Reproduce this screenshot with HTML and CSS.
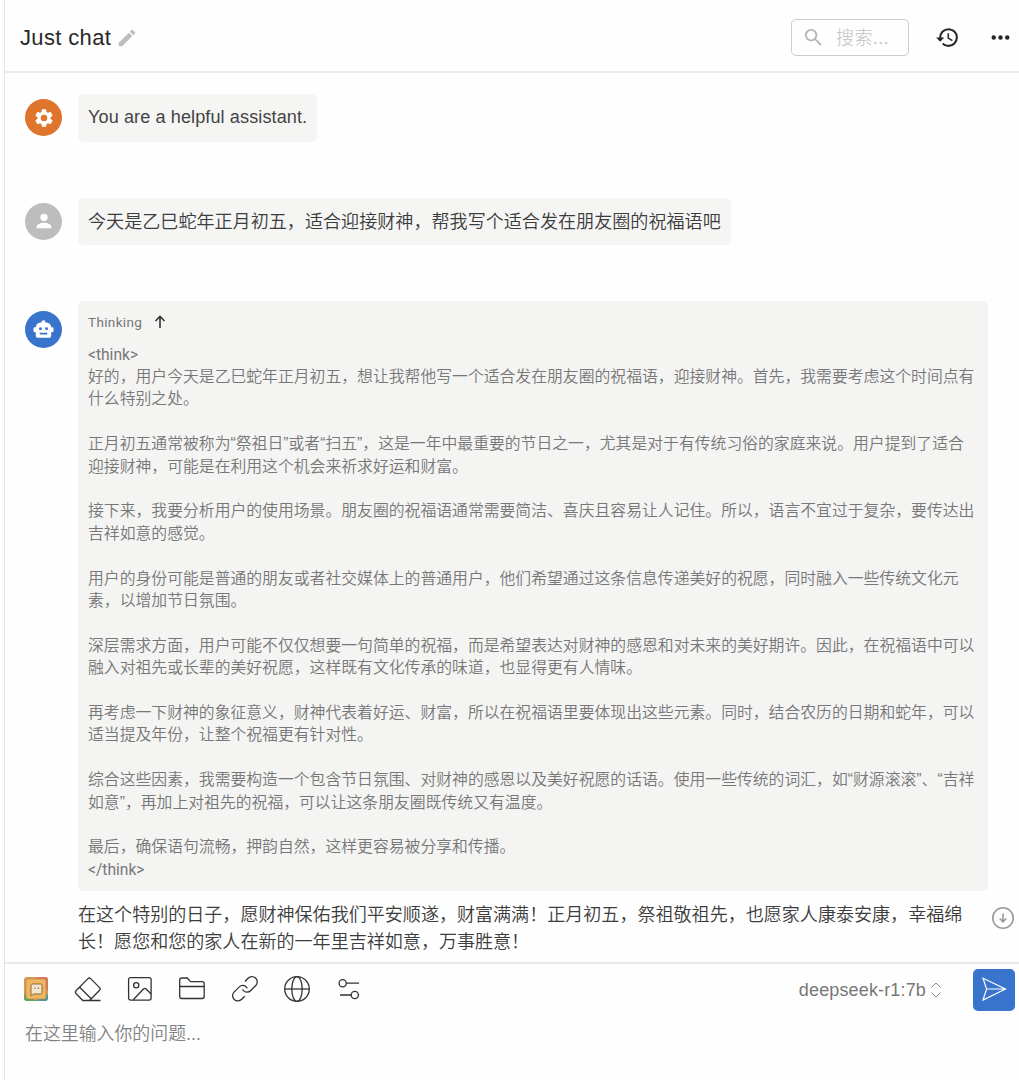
FILE: index.html
```html
<!DOCTYPE html>
<html lang="zh-CN">
<head>
  <meta charset="UTF-8">
  <meta name="viewport" content="width=device-width, initial-scale=1.0">
  <link rel="stylesheet" href="styles.css">
  <title>Just chat</title>
</head>
<body>
<div class="app">

  <header class="header">
    <h1>Just chat</h1>
    <svg class="edit" viewBox="0 0 24 24"><path d="M3 17.25V21h3.75L17.81 9.94l-3.75-3.75L3 17.25zM20.71 7.04a1 1 0 0 0 0-1.41l-2.34-2.34a1 1 0 0 0-1.41 0l-1.83 1.83 3.75 3.75 1.83-1.83z"/></svg>
    <div class="search">
      <svg viewBox="0 0 24 24"><path d="M15.5 14h-.79l-.28-.27A6.47 6.47 0 0 0 16 9.5 6.5 6.5 0 1 0 9.5 16c1.61 0 3.09-.59 4.23-1.57l.27.28v.79l5 4.99L20.49 19l-4.99-5zm-6 0a4.5 4.5 0 1 1 0-9 4.5 4.5 0 0 1 0 9z"/></svg>
      <span>搜索...</span>
    </div>
    <svg class="history" viewBox="0 0 24 24"><path d="M13.5 8H12v5l4.28 2.54.72-1.21-3.5-2.08V8M13 3a9 9 0 0 0-9 9H1l3.96 4.03L9 12H6a7 7 0 1 1 7 7c-1.93 0-3.68-.79-4.94-2.06l-1.42 1.42A8.9 8.9 0 0 0 13 21a9 9 0 0 0 0-18"/></svg>
    <svg class="more" viewBox="0 0 24 24"><path d="M6 10a2 2 0 1 0 0 4 2 2 0 0 0 0-4zm12 0a2 2 0 1 0 0 4 2 2 0 0 0 0-4zm-6 0a2 2 0 1 0 0 4 2 2 0 0 0 0-4z"/></svg>
  </header>

  <main class="messages">
    <div class="message">
      <div class="avatar system">
        <svg viewBox="0 0 24 24"><path d="M19.14 12.94c.04-.3.06-.61.06-.94 0-.32-.02-.64-.07-.94l2.03-1.58a.49.49 0 0 0 .12-.61l-1.92-3.32a.49.49 0 0 0-.59-.22l-2.39.96c-.5-.38-1.03-.7-1.62-.94l-.36-2.54a.48.48 0 0 0-.48-.41h-3.84c-.24 0-.43.17-.47.41l-.36 2.54c-.59.24-1.13.57-1.62.94l-2.39-.96a.48.48 0 0 0-.59.22L2.74 8.87c-.12.21-.08.47.12.61l2.03 1.58c-.05.3-.09.63-.09.94s.02.64.07.94l-2.03 1.58a.49.49 0 0 0-.12.61l1.92 3.32c.12.22.37.29.59.22l2.39-.96c.5.38 1.03.7 1.62.94l.36 2.54c.05.24.24.41.48.41h3.84c.24 0 .44-.17.47-.41l.36-2.54c.59-.24 1.13-.56 1.62-.94l2.39.96c.22.08.47 0 .59-.22l1.92-3.32a.48.48 0 0 0-.12-.61l-2.01-1.58zM12 15.6a3.6 3.6 0 1 1 0-7.2 3.6 3.6 0 0 1 0 7.2z"/></svg>
      </div>
      <div class="bubble latin">You are a helpful assistant.</div>
    </div>

    <div class="message">
      <div class="avatar user">
        <svg viewBox="0 0 24 24"><path d="M12 12a4 4 0 1 0 0-8 4 4 0 0 0 0 8zm0 2c-2.67 0-8 1.34-8 4v2h16v-2c0-2.66-5.33-4-8-4z"/></svg>
      </div>
      <div class="bubble">今天是乙巳蛇年正月初五，适合迎接财神，帮我写个适合发在朋友圈的祝福语吧</div>
    </div>

    <div class="message reply">
      <div class="avatar bot">
        <svg viewBox="0 0 24 24"><path fill-rule="evenodd" d="M12 1.500a2.200 2.200 0 0 1 2.200 2.500h1.300a5.500 5.500 0 0 1 5.300 5.500H22a1.500 1.500 0 0 1 1.500 1.500v2.500A1.500 1.500 0 0 1 22 15h-1.200v4a2.500 2.500 0 0 1-2.500 2.500H5.700A2.500 2.500 0 0 1 3.200 19v-4H2a1.500 1.500 0 0 1-1.500-1.500V11A1.500 1.500 0 0 1 2 9.500h1.200A5.500 5.500 0 0 1 8.500 4h1.300A2.200 2.200 0 0 1 12 1.500zM8.500 9.500a1.700 1.700 0 1 0 0 3.400 1.700 1.700 0 0 0 0-3.400zm7 0a1.700 1.700 0 1 0 0 3.400 1.700 1.700 0 0 0 0-3.400zM7.700 15.700v2h8.600v-2z"/></svg>
      </div>
      <div class="content">
        <div class="thinking">
          <div class="thinking-title">Thinking
            <svg viewBox="0 0 12 14"><path d="M6 13V1.5M1.5 6 6 1.5 10.5 6"/></svg>
          </div>
          <div class="think-text"><span class="tag">&lt;think&gt;</span>
好的，用户今天是乙巳蛇年正月初五，想让我帮他写一个适合发在朋友圈的祝福语，迎接财神。首先，我需要考虑这个时间点有
什么特别之处。

正月初五通常被称为“祭祖日”或者“扫五”，这是一年中最重要的节日之一，尤其是对于有传统习俗的家庭来说。用户提到了适合
迎接财神，可能是在利用这个机会来祈求好运和财富。

接下来，我要分析用户的使用场景。朋友圈的祝福语通常需要简洁、喜庆且容易让人记住。所以，语言不宜过于复杂，要传达出
吉祥如意的感觉。

用户的身份可能是普通的朋友或者社交媒体上的普通用户，他们希望通过这条信息传递美好的祝愿，同时融入一些传统文化元
素，以增加节日氛围。

深层需求方面，用户可能不仅仅想要一句简单的祝福，而是希望表达对财神的感恩和对未来的美好期许。因此，在祝福语中可以
融入对祖先或长辈的美好祝愿，这样既有文化传承的味道，也显得更有人情味。

再考虑一下财神的象征意义，财神代表着好运、财富，所以在祝福语里要体现出这些元素。同时，结合农历的日期和蛇年，可以
适当提及年份，让整个祝福更有针对性。

综合这些因素，我需要构造一个包含节日氛围、对财神的感恩以及美好祝愿的话语。使用一些传统的词汇，如“财源滚滚”、“吉祥
如意”，再加上对祖先的祝福，可以让这条朋友圈既传统又有温度。

最后，确保语句流畅，押韵自然，这样更容易被分享和传播。
<span class="tag">&lt;/think&gt;</span></div>
        </div>
        <p class="answer">在这个特别的日子，愿财神保佑我们平安顺遂，财富满满！正月初五，祭祖敬祖先，也愿家人康泰安康，幸福绵
长！愿您和您的家人在新的一年里吉祥如意，万事胜意！</p>
      </div>
      <svg class="to-bottom" viewBox="0 0 24 24"><circle cx="12" cy="12" r="10.2"/><path d="M12 7.5v8M8.7 12.5l3.3 3.3 3.3-3.3"/></svg>
    </div>
  </main>

  <footer class="composer">
    <div class="toolbar">
      <svg class="logo" viewBox="0 0 24 24">
        <rect width="24" height="24" rx="3" fill="#d99a58"/>
        <path d="M12 0h9a3 3 0 0 1 3 3v11z" fill="#d9785a"/>
        <path d="M0 17v4a3 3 0 0 0 3 3h9z" fill="#5da568"/>
        <path d="M11 24h10a3 3 0 0 0 3-3v-4z" fill="#5297a0"/>
        <rect x="2" y="2" width="20" height="20" rx="2" fill="#edb65f" stroke="#b98048" stroke-width=".6"/>
        <path d="M8.500 7h8A1.500 1.500 0 0 1 18 8.500v7a1.500 1.500 0 0 1-1.500 1.500H9.500L7 19V8.500A1.500 1.500 0 0 1 8.500 7z" fill="#f5e4cc" stroke="#8f683f"/>
        <path d="M11 10.500V12M14.500 10.500V12" stroke="#8a623d"/>
      </svg>
      <svg class="tool" viewBox="0 0 28 28"><path d="M2.200 15.500 14 3.600q1.300-1.200 2.600 0l9 9q1.200 1.300 0 2.600L15.500 25.500H8.800l-6.600-6.700q-1.500-1.600 0-3.300zM5.700 12.200l11.500 11.500M8.800 25.500h17.700"/></svg>
      <svg class="tool" viewBox="0 0 28 28"><rect x="2.600" y="2.600" width="22.500" height="22.500" rx="2"/><circle cx="10.200" cy="10.300" r="2.600"/><path d="m7 25 10.500-11q1.300-1.200 2.600 0l5 5"/></svg>
      <svg class="tool" viewBox="0 0 28 28"><path d="M1.700 21.500V5q0-2 2-2h5.600l3.300 3.700h11.600q2 0 2 2v12.800q0 2-2 2H3.700q-2 0-2-2zM1.700 11.500h24.500"/></svg>
      <svg class="tool" viewBox="0 0 28 28"><path d="m14 6.500 3.100-3.200a5 5 0 0 1 7.700 7.200l-5 5a5 5 0 0 1-7.600-.1l-.6-1.100"/><path d="m13.800 21.200-3.100 3.100A5 5 0 0 1 3 17.100l5-5a5 5 0 0 1 7.600.2l.7 1"/></svg>
      <svg class="tool" viewBox="0 0 28 28"><circle cx="14" cy="14" r="12.300"/><ellipse cx="14" cy="14" rx="5.200" ry="12.300"/><path d="M1.700 14h24.600"/></svg>
      <svg class="tool" viewBox="0 0 28 28"><circle cx="7.700" cy="8.200" r="3.600"/><path d="M11.300 8.200h12.800M5 20h11.200"/><circle cx="19.800" cy="20" r="3.600"/></svg>
      <span class="model">deepseek-r1:7b</span>
      <svg class="select" viewBox="0 0 12 16"><path d="M1.500 5.500 6 1l4.500 4.500M1.500 10.500 6 15l4.500-4.500"/></svg>
      <button class="send" aria-label="发送">
        <svg viewBox="0 0 26 26"><path d="M2 2.200 24.500 13 2 24l3.600-11zM5.600 13h18.900"/></svg>
      </button>
    </div>
    <div class="placeholder">在这里输入你的问题...</div>
  </footer>

</div>
</body>
</html>
```
FILE: styles.css
```css
* {
  box-sizing: border-box;
}

body {
  margin: 0;
  background: #fefefe;
  color: #3c3c3c;
  font-family: "Liberation Sans", "Noto Sans CJK SC", sans-serif;
  font-weight: 350;
  text-spacing-trim: space-all;
}

svg {
  display: block;
  flex: none;
  fill: currentColor;
}

.app {
  height: 1080px;
  margin-left: 4px;
  border-left: 1px solid #e5e5e5;
  display: flex;
  flex-direction: column;
  overflow: hidden;
}

/* header */
.header {
  height: 73px;
  flex: none;
  display: flex;
  align-items: center;
  padding: 4px 8px 0 15px;
  border-bottom: 2px solid #ebebeb;
  color: #282828;
}

h1 {
  margin: 0;
  font-size: 22px;
  font-weight: 400;
  letter-spacing: 0.35px;
}

.edit {
  width: 22px;
  height: 22px;
  margin-left: 5px;
  color: #bdbdbd;
}

.search {
  width: 118px;
  height: 37px;
  margin-left: auto;
  display: flex;
  align-items: center;
  padding-left: 10px;
  border: 1px solid #ccc;
  border-radius: 5px;
  color: #c2c2c2;
  font-size: 18px;
  font-weight: 300;
  letter-spacing: 0.4px;
}

.search svg {
  width: 23px;
  height: 23px;
  margin-right: 11px;
  color: #b5b5b5;
}

.search span {
  margin-top: -3px;
}

.history {
  width: 25px;
  height: 25px;
  margin-left: 26px;
}

.more {
  width: 27px;
  height: 27px;
  margin-left: 27px;
  margin-right: -3px;
}

/* messages */
.messages {
  height: 889px;
  flex: none;
  padding: 21px 0 0 20px;
}

.message {
  display: flex;
  gap: 16px;
  align-items: center;
  margin-bottom: 56px;
}

.message.reply {
  align-items: flex-start;
  margin-bottom: 0;
}

.avatar {
  width: 37px;
  height: 37px;
  flex: none;
  border-radius: 50%;
  color: #fff;
  display: grid;
  place-items: center;
}

.avatar svg {
  width: 22px;
  height: 22px;
}

.system {
  background: #df742d;
}

.user {
  background: #bdbdbd;
}

.bot {
  background: #3874cb;
  margin-top: 10px;
}

.bot svg {
  width: 21px;
  height: 21px;
}

.bubble {
  height: 47.5px;
  padding: 0 10px;
  border-radius: 5px;
  background: #f5f5f4;
  font-size: 18.08px;
  line-height: 48px;
  white-space: nowrap;
}

.latin {
  color: #444;
  letter-spacing: 0.1px;
  line-height: 47px;
}

.content {
  width: 910px;
  flex: none;
}

.thinking {
  height: 590px;
  padding: 11px 10px 0;
  border-radius: 5px;
  background: #f4f4f3;
  color: #777;
}

.thinking-title {
  display: flex;
  align-items: center;
  gap: 12px;
  height: 20px;
  font-family: Roboto, sans-serif;
  font-size: 13.5px;
  font-weight: 400;
  letter-spacing: 0.35px;
}

.thinking-title svg {
  width: 12px;
  height: 14px;
  fill: none;
  stroke: #333;
  stroke-width: 1.6;
}

.think-text {
  margin-top: 11.5px;
  font-size: 15.83px;
  line-height: 22.4px;
  white-space: pre;
}

.tag {
  font-family: Roboto, sans-serif;
  font-size: 15.6px;
  font-weight: 400;
}

.answer {
  margin: 11px 0 0;
  font-size: 18.06px;
  line-height: 27px;
  white-space: pre;
}

.to-bottom {
  width: 24px;
  height: 24px;
  margin-top: 605px;
  margin-left: -13px;
  fill: none;
  stroke: #999;
  stroke-width: 1.6;
}

/* composer */
.composer {
  flex: 1;
  border-top: 2px solid #e9e9e9;
  padding: 5px 4px 0 19px;
}

.toolbar {
  display: flex;
  align-items: center;
  height: 42px;
}

.logo {
  width: 24px;
  height: 24px;
  margin: 0 26px 3px 0;
}

.tool {
  width: 28px;
  height: 28px;
  margin: 0 24.2px 3px 0;
  fill: none;
  stroke: #333;
  stroke-width: 1.3;
}

.model {
  margin-left: auto;
  color: #777;
  font-size: 18px;
  letter-spacing: 0.15px;
}

.select {
  width: 12px;
  height: 16px;
  margin-left: 4px;
  fill: none;
  stroke: #888;
}

.send {
  width: 42px;
  height: 42px;
  margin-left: 31px;
  padding: 0;
  border: 0;
  border-radius: 5px;
  background: #3874cb;
  display: grid;
  place-items: center;
}

.send svg {
  width: 26px;
  height: 26px;
  margin-bottom: 3px;
  fill: none;
  stroke: #fff;
  stroke-width: 1.2;
}

.placeholder {
  margin-top: 10px;
  padding-left: 1px;
  color: #828282;
  font-size: 17.9px;
  line-height: 27px;
}
```
